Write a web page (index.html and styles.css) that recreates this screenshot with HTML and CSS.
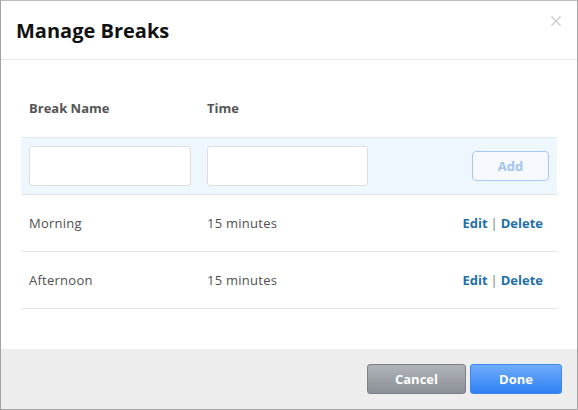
FILE: index.html
```html
<!DOCTYPE html>
<html>
<head>
<meta charset="utf-8">
<link rel="stylesheet" href="styles.css">
</head>
<body>
<div class="dialog">
  <div class="header">
    <h1 class="title">Manage Breaks</h1>
    <button class="close" aria-label="Close">
      <svg width="10" height="10" viewBox="0 0 10 10"><path d="M0.5 0.5 L9.5 9.5 M9.5 0.5 L0.5 9.5" stroke="#c8c8c8" stroke-width="1.2" fill="none"/></svg>
    </button>
  </div>
  <div class="body">
    <div class="row head">
      <div class="cell">Break Name</div>
      <div class="cell">Time</div>
      <div class="cell"></div>
    </div>
    <div class="row add-row">
      <div class="cell"><input class="field" type="text"></div>
      <div class="cell"><input class="field" type="text"></div>
      <div class="cell actions"><button class="add">Add</button></div>
    </div>
    <div class="row">
      <div class="cell">Morning</div>
      <div class="cell">15 minutes</div>
      <div class="cell actions links"><a class="link">Edit</a><span class="sep">|</span><a class="link">Delete</a></div>
    </div>
    <div class="row">
      <div class="cell">Afternoon</div>
      <div class="cell">15 minutes</div>
      <div class="cell actions links"><a class="link">Edit</a><span class="sep">|</span><a class="link">Delete</a></div>
    </div>
  </div>
  <div class="footer">
    <button class="btn cancel">Cancel</button>
    <button class="btn done">Done</button>
  </div>
</div>
</body>
</html>
```
FILE: styles.css
```css
* { box-sizing: border-box; }
html, body { margin: 0; padding: 0; background: #fff; }
body { font-family: "Open Sans", "Liberation Sans", sans-serif; }
.dialog {
  width: 578px;
  height: 410px;
  border: 1px solid #a3a3a3;
  border-top-color: #bdbdbd;
  display: flex;
  flex-direction: column;
  background: #fff;
}
.header {
  height: 59px;
  flex: none;
  border-bottom: 1px solid #e6e6e6;
  display: flex;
  align-items: center;
  justify-content: space-between;
  padding: 0 15px 0 15px;
}
.title {
  margin: 0;
  font-size: 20px;
  font-weight: 700;
  color: #111;
  letter-spacing: 0;
  padding-top: 1px;
}
.close {
  border: 0;
  background: none;
  padding: 0;
  width: 10px;
  height: 10px;
  align-self: flex-start;
  margin-top: 15px;
  margin-right: 1px;
  display: flex;
}
.body {
  flex: 1;
  padding: 21px 20px 0 20px;
}
.row {
  display: grid;
  grid-template-columns: 178px 177px 1fr;
  align-items: center;
  height: 57px;
  border-bottom: 1px solid #e3e3e3;
  font-size: 13px;
  color: #4f4f4f;
  letter-spacing: 0.25px;
}
.row.head {
  border-bottom: 1px solid #e3e8ee;
  font-weight: 700;
  color: #555;
  letter-spacing: 0;
  padding-bottom: 2px;
}
.row.add-row {
  background: #eef6fe;
  border-bottom-color: #e0e4e8;
}
.cell {
  padding: 0 8px;
}
.field {
  display: block;
  width: 162px;
  height: 40px;
  margin: 0;
  border: 1px solid #dedede;
  border-radius: 3px;
  background: #fff;
  outline: none;
}
.cell:nth-child(2) .field { width: 161px; }
.actions {
  display: flex;
  justify-content: flex-end;
}
.add {
  width: 77px;
  height: 30px;
  border: 1px solid #a6c8f8;
  border-radius: 4px;
  background: #f6faff;
  color: #a3c3f3;
  font-family: inherit;
  font-size: 13px;
  font-weight: 700;
  padding: 0;
}
.links {
  padding-right: 14px;
  align-items: center;
  letter-spacing: 0;
}
.link {
  color: #1f6fa8;
  font-weight: 700;
}
.sep {
  color: #777;
  margin: 0 3px;
}
.footer {
  height: 60px;
  flex: none;
  background: #ededed;
  display: flex;
  justify-content: flex-end;
  align-items: flex-start;
  gap: 4px;
  padding: 15px 15px 0 0;
}
.btn {
  height: 30px;
  border-radius: 3px;
  font-family: inherit;
  font-size: 13px;
  font-weight: 700;
  color: #fff;
  padding: 0;
}
.cancel {
  width: 99px;
  border: 1px solid #7d8086;
  background: linear-gradient(#b0b4ba, #8b8f96);
}
.done {
  width: 92px;
  border: 1px solid #3d86ee;
  background: linear-gradient(#6fadfb, #2f80f4);
}
```
